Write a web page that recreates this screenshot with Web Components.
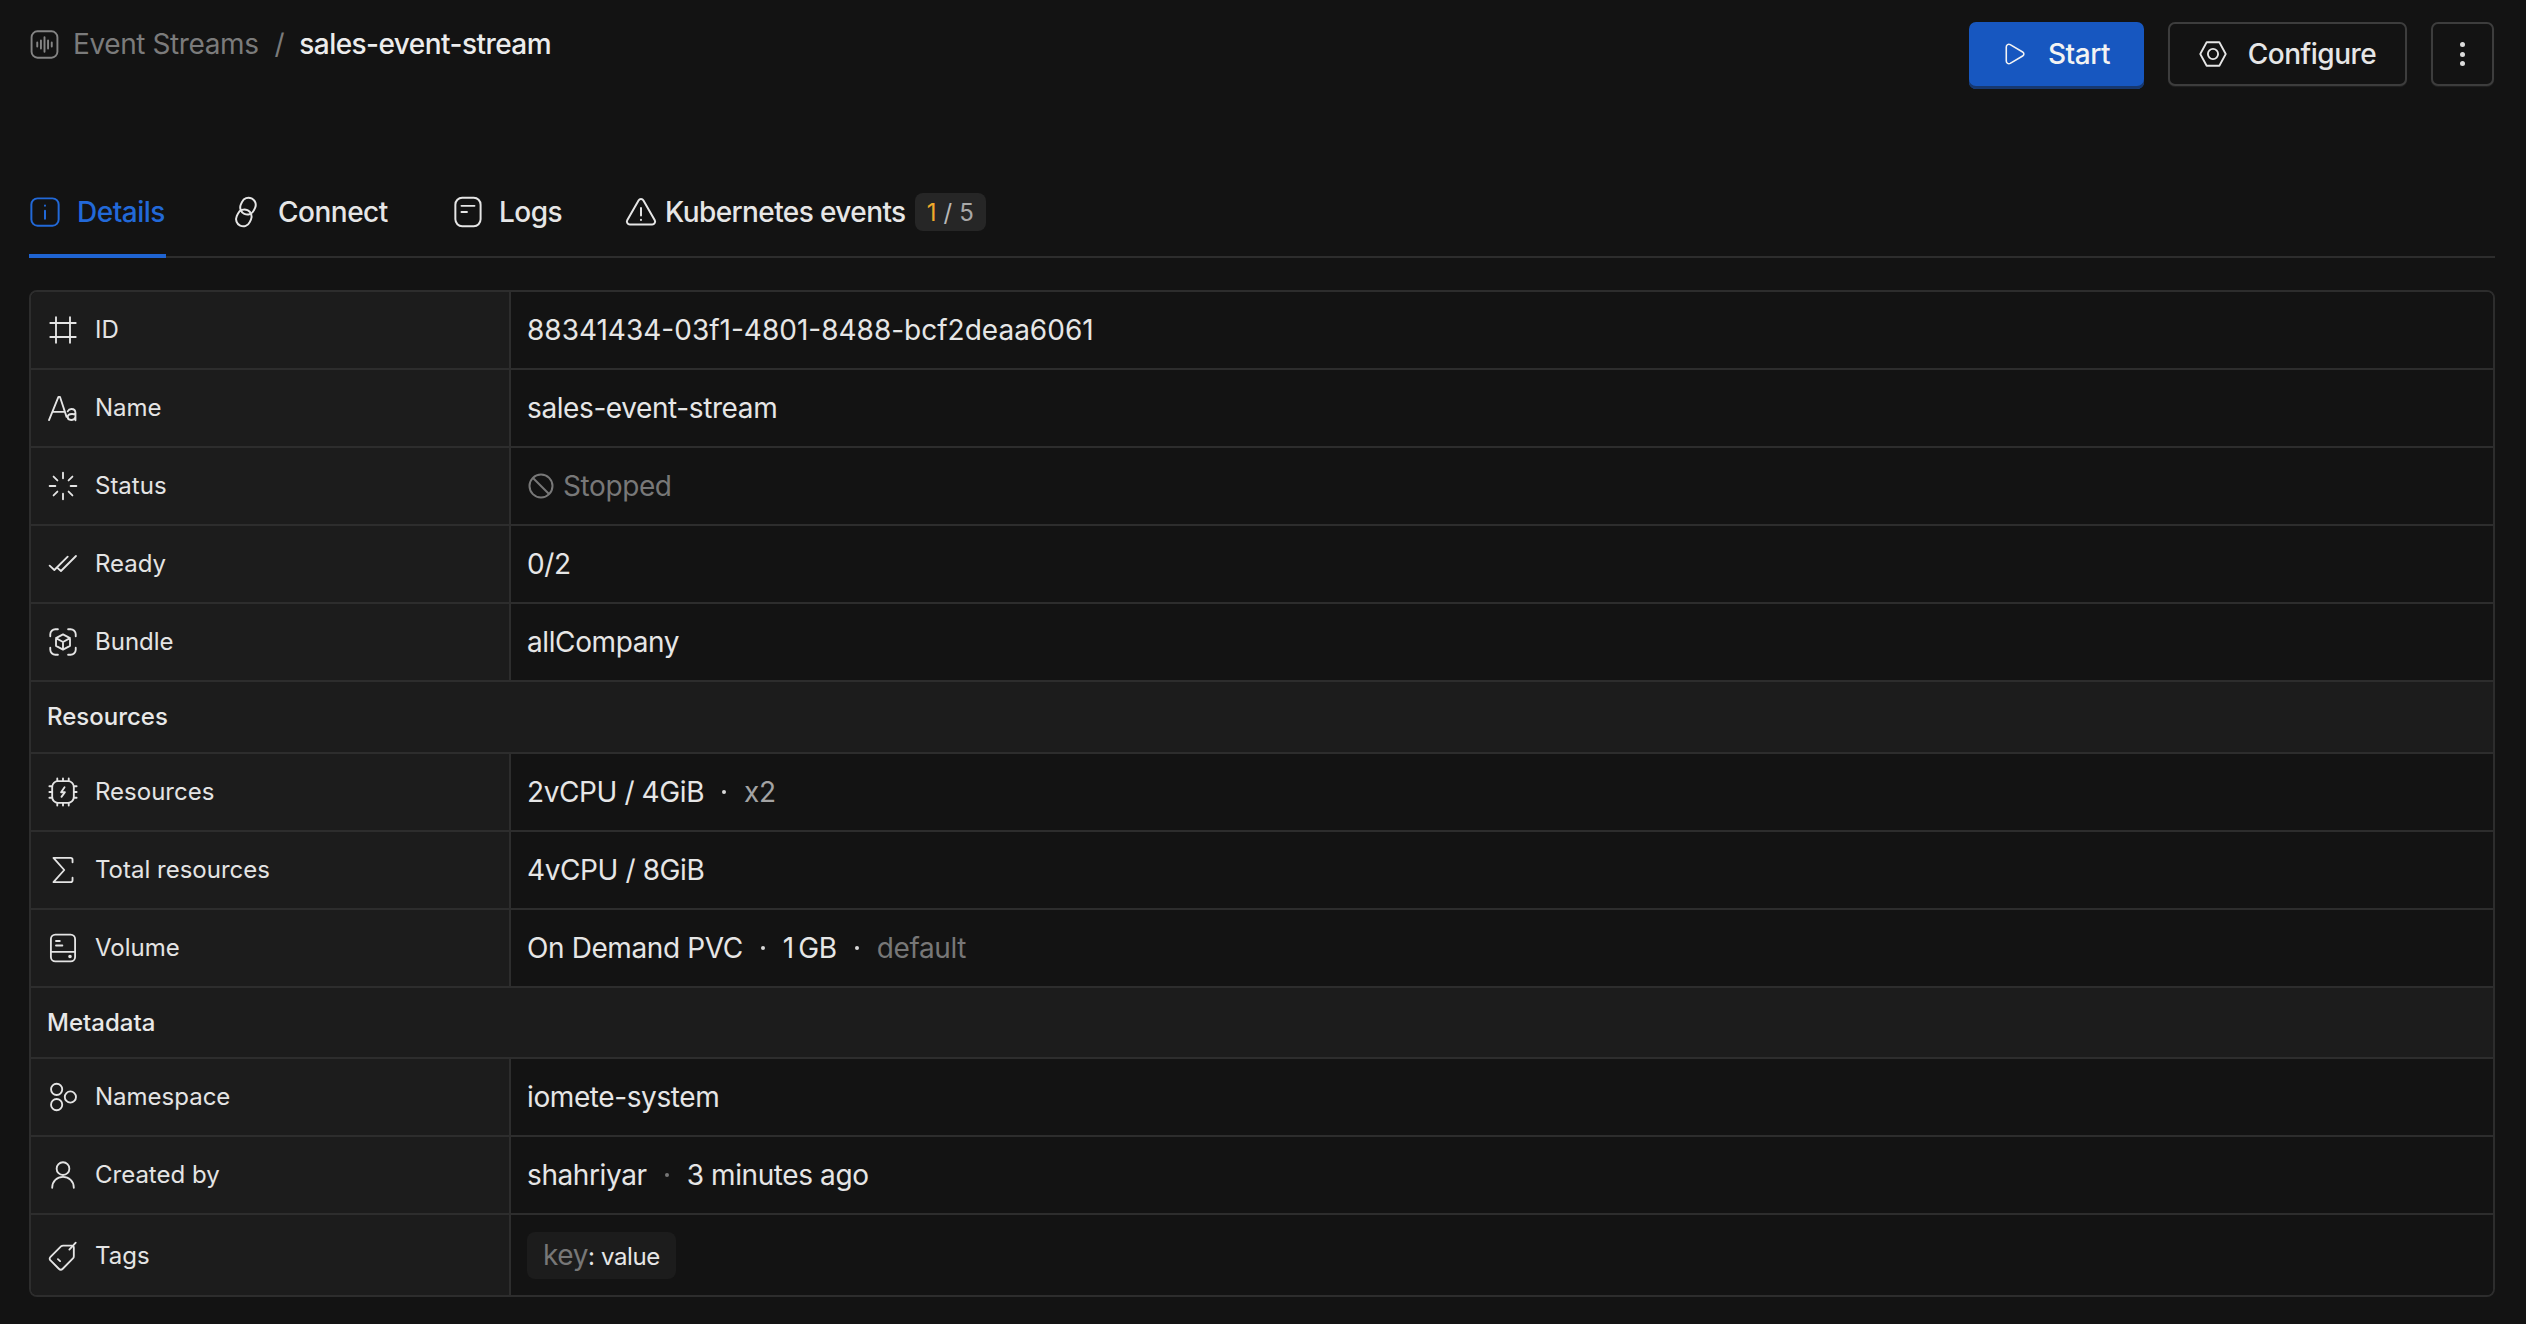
<!doctype html>
<html><head><meta charset="utf-8">
<style>
html,body{margin:0;background:#131313;}
body{font-family:Inter,"Liberation Sans",sans-serif;color:#e6e6e6;}
</style></head>
<body>
<app-page>
  <page-header slot="header" crumb-parent="Event Streams" crumb-current="sales-event-stream"></page-header>
  <tab-bar slot="tabs">
    <tab-item icon="info" active w="137" gap="17">Details</tab-item>
    <tab-item icon="link" w="156" gap="16">Connect</tab-item>
    <tab-item icon="logs" w="107" gap="15">Logs</tab-item>
    <tab-item icon="warn" w="360" gap="9" count="1" total="5">Kubernetes events</tab-item>
  </tab-bar>
  <detail-table slot="table">
    <detail-row icon="hash" label="ID" plain>88341434-03f1-4801-8488-bcf2deaa6061</detail-row>
    <detail-row icon="aa" label="Name">sales-event-stream</detail-row>
    <detail-row icon="status" label="Status"><status-pill>Stopped</status-pill></detail-row>
    <detail-row icon="ready" label="Ready">0/2</detail-row>
    <detail-row icon="bundle" label="Bundle">allCompany</detail-row>
    <section-row>Resources</section-row>
    <detail-row icon="chip" label="Resources"><dot-list><span>2vCPU / 4GiB</span><span class="m">x2</span></dot-list></detail-row>
    <detail-row icon="sigma" label="Total resources">4vCPU / 8GiB</detail-row>
    <detail-row icon="volume" label="Volume"><dot-list><span>On Demand PVC</span><span>1&#8201;GB</span><span class="d">default</span></dot-list></detail-row>
    <section-row h="69">Metadata</section-row>
    <detail-row icon="ns" label="Namespace">iomete-system</detail-row>
    <detail-row icon="user" label="Created by"><dot-list dim><span>shahriyar</span><span>3 minutes ago</span></dot-list></detail-row>
    <detail-row icon="tag" label="Tags" h="80"><tag-chip k="key" v="value"></tag-chip></detail-row>
  </detail-table>
</app-page>
<script>
const ICONS={
 stream:'<rect x="2.2" y="2" width="19.6" height="20" rx="4.5"/><path d="M6.5 10.5v3M9.3 9v6M12 6.5v11M14.7 9v6M17.5 10.5v3"/>',
 info:'<rect x="2" y="2" width="20" height="20" rx="4.5"/><path d="M12 11v6M12 7.2v.3"/>',
 link:'<g transform="translate(-.8 0) rotate(25 12 12)"><rect x="6.3" y="1.2" width="10.5" height="12.5" rx="5.2"/><rect x="7.2" y="10.3" width="10.5" height="12.5" rx="5.2"/></g>',
 logs:'<rect x="2" y="1.6" width="18.5" height="20.8" rx="5"/><path d="M6.5 7.5h9.5M6.5 12h4"/>',
 warn:'<path d="M10.2 3.5 1.9 18a2.2 2.2 0 0 0 1.9 3.2h16.4a2.2 2.2 0 0 0 1.9-3.2L13.8 3.5a2.1 2.1 0 0 0-3.6 0Z"/><path d="M12 9v5.5M12 17.6v.2"/>',
 play:'<path d="M4 5.5c0-2 2-3 3.6-2.1L19 10.2c1.5 .9 1.5 2.7 0 3.6L7.6 20.6C6 21.5 4 20.5 4 18.5Z"/>',
 nut:'<path d="M7 2.8h10l5 9.2-5 9.2H7L2 12Z"/><circle cx="12" cy="12" r="4"/>',
 hash:'<path d="M2 6.5h20M2 17.5h20M6.5 2v20M17.5 2v20"/>',
 aa:'<path d="M1 21.5 8.4 3.2h1.2L14.8 19M3.6 15h9.6"/><path d="M15.7 14.6c.6-1.2 1.6-1.8 2.9-1.8 2 0 3.2 1.2 3.2 3.2v5.6M21.8 17.2c-.6-.3-1.6-.5-2.7-.5-2 0-3.4 1-3.4 2.4s1.100 2.3 2.7 2.3c1.6 0 2.9-.8 3.4-2.2"/>',
 status:'<path d="M12 1.5v4.5M12 18v4.5M1.5 12h4.5M18 12h4.5M4.6 4.6l3 3M16.4 16.4l3 3M4.6 19.4l3-3M16.4 7.6l3-3"/>',
 ready:'<path d="M1.5 13.3l3.7 3.4L15.7 6.2M10.4 17.5 22.2 5.7M7.8 15.2l2.6 2.3"/>',
 bundle:'<path d="M2 7.5V6a4 4 0 0 1 4-4h2M16 2h2a4 4 0 0 1 4 4v1.5M22 16.5V18a4 4 0 0 1-4 4h-2M8 22H6a4 4 0 0 1-4-4v-1.5"/><path d="M12 6l5.5 3v6L12 18l-5.5-3V9ZM6.5 9 12 12l5.5-3M12 12v6"/>',
 chip:'<rect x="3.5" y="3.5" width="17" height="17" rx="4.5"/><path d="M7.5 1.3v2.2M12 1.3v2.2M16.5 1.3v2.2M7.5 20.5v2.2M12 20.5v2.2M16.5 20.5v2.2M1.3 7.5h2.2M1.3 12h2.2M1.3 16.5h2.2M20.5 7.5h2.2M20.5 12h2.2M20.5 16.5h2.2"/><path d="M13.2 8.3 10.5 12.2h3L10.8 15.8"/>',
 sigma:'<path d="M19.5 6V4a1.5 1.5 0 0 0-1.5-1.5H4.5L13 12 4.5 21.5H18a1.5 1.5 0 0 0 1.5-1.5v-2"/>',
 volume:'<rect x="2.5" y="1.5" width="19" height="21" rx="3.5"/><path d="M2.5 15h19M6.5 6.5h3M6.5 10h5"/><circle cx="17.5" cy="18.7" r=".7"/>',
 ns:'<circle cx="7" cy="6" r="4.4"/><circle cx="7" cy="18" r="4.4"/><circle cx="17.8" cy="12" r="4.4"/>',
 user:'<circle cx="12" cy="7" r="5"/><path d="M3.5 22c0-5 3.8-8.5 8.5-8.5s8.5 3.5 8.5 8.5"/>',
 tag:'<path d="M2.2 12.7 10.4 4.5c.5-.5 1.1-.7 1.8-.7h6.6c1 0 1.7.8 1.7 1.7v6.6c0 .7-.2 1.3-.7 1.800l-8 8.100c-.9.9-2.2.9-3.1 0l-6.500-6.500c-.9-.8-.9-1.900 0-2.800Z"/><path d="M8 14.5l1.7 1.500M17 7l5-5.500"/>'
};
function define(name,render){
  customElements.define(name,class extends HTMLElement{
    connectedCallback(){
      if(this.shadowRoot) return;
      this.attachShadow({mode:'open'}).innerHTML=render(this);
    }
  });
}
define('ui-icon',el=>{
  const s=el.getAttribute('size')||28, sw=el.getAttribute('sw')||1.45;
  return `<style>:host{display:inline-flex;flex:none;width:${s}px;height:${s}px}svg{width:100%;height:100%;display:block;fill:none;stroke:currentColor;stroke-width:${sw};stroke-linecap:round;stroke-linejoin:round;overflow:visible}</style><svg viewBox="1 1 22 22">${ICONS[el.getAttribute('name')]||''}</svg>`;
});
define('app-page',()=>`<style>:host{display:block;box-sizing:border-box;width:2526px;height:1324px;padding:22px 31px 0 29px;background:#131313;overflow:hidden}
 .tabs{display:block;margin-top:86px}.table{display:block;margin-top:32px}</style>
 <slot name="header"></slot><div class="tabs"><slot name="tabs"></slot></div><div class="table"><slot name="table"></slot></div>`);
define('page-header',el=>`<style>:host{display:flex;justify-content:space-between;align-items:flex-start;height:67px}
 .crumb{display:flex;align-items:center;font-size:28px;height:44px;padding-left:1px;letter-spacing:-.4px}
 .p{color:#7b7b7b;margin-left:14px}.s{color:#7b7b7b;margin:0 15px 0 16px}.c{color:#ececec;font-weight:500;letter-spacing:-.55px}
 .acts{display:flex;gap:24px;margin-right:1px}
 ui-icon{color:#858585}</style>
 <div class="crumb"><ui-icon name="stream" size="29"></ui-icon><span class="p">${el.getAttribute('crumb-parent')}</span><span class="s">/</span><span class="c">${el.getAttribute('crumb-current')}</span></div>
 <div class="acts"><ui-button primary icon="play" w="175">Start</ui-button><ui-button icon="nut" w="239">Configure</ui-button><ui-button more w="63"></ui-button></div>`);
define('ui-button',el=>{
  const p=el.hasAttribute('primary'),more=el.hasAttribute('more');
  return `<style>:host{display:inline-flex;box-sizing:border-box;width:${el.getAttribute('w')}px;height:${p?67:64}px}
  .b{flex:1;box-sizing:border-box;display:flex;align-items:center;justify-content:center;gap:${p?21:21}px;font-size:28px;font-weight:500;letter-spacing:-.5px;border-radius:7px;
   ${p?'height:67px;background:#1757c0;border:0;color:#f3f3f3;box-shadow:inset 0 -3px 0 #17386f;padding-bottom:3px;':'height:64px;background:#131313;border:2px solid #3d3d3d;color:#e6e6e6;box-shadow:0 1px 1px #222;'}}
  .dots{display:flex;flex-direction:column;gap:4.5px}.dots i{width:5px;height:5px;border-radius:50%;background:#dcdcdc;display:block}</style>
  <div class="b">${more?'<div class="dots"><i></i><i></i><i></i></div>':`<ui-icon name="${el.getAttribute('icon')}" size="${p?24:28}"></ui-icon><span><slot></slot></span>`}</div>`;
});
define('tab-bar',()=>`<style>:host{display:flex;height:83px;box-sizing:border-box;border-bottom:2px solid #2d2d2d;align-items:stretch}
 </style><slot></slot>`);
define('tab-item',el=>{
  const a=el.hasAttribute('active'),c=el.getAttribute('count'),ic=el.getAttribute('icon');
  const isK=!!c;
  return `<style>:host{display:flex;box-sizing:border-box;flex:none;width:${el.getAttribute('w')}px;margin-right:${ic==='logs'?'65px':isK?'0':'66px'};white-space:nowrap;
   align-items:center;height:83px;padding-bottom:9px;font-size:28px;font-weight:500;letter-spacing:${isK?'-.6px':'-.5px'};color:${a?'#2269d8':'#e6e6e6'};${a?'box-shadow:inset 0 -4px 0 #1f64d2;':''}gap:${el.getAttribute('gap')}px;padding-left:${a?'1px':'0'}}
   .bd{display:inline-flex;align-items:center;justify-content:center;height:38px;width:72px;border-radius:8px;background:#262626;font-size:24px;font-weight:400;letter-spacing:0;color:#a8a8a8;gap:7px}
   .y{color:#f0aa2b}.w{color:#b8b8b8}</style>
   <ui-icon name="${ic}" size="30"></ui-icon><span><slot></slot></span>${isK?`<span class="bd"><span class="y">${c}</span><span class="w">/</span><span>${el.getAttribute('total')}</span></span>`:''}`;
});
define('detail-table',()=>`<style>:host{display:block;box-sizing:border-box;border:2px solid #2d2d2d;border-radius:8px;overflow:hidden;height:1007px}</style><slot></slot>`);
define('detail-row',el=>{
  const h=+(el.getAttribute('h')||76);
  return `<style>:host{display:grid;grid-template-columns:480px 1fr;height:${h+2}px;box-sizing:border-box;border-bottom:2px solid #2d2d2d}
  :host(:last-child){border-bottom:0}
  .l{display:flex;align-items:center;gap:18px;background:#1c1c1c;border-right:2px solid #2d2d2d;padding-left:18px;font-size:24px;font-weight:400;color:#e4e4e4}
  .l span{position:relative;top:-1px}
  .v{display:flex;align-items:center;padding-left:16px;font-size:28px;letter-spacing:${el.hasAttribute('plain')?'0':'-.4px'};color:#e6e6e6;background:#131313}</style>
  <div class="l"><ui-icon name="${el.getAttribute('icon')}"></ui-icon><span>${el.getAttribute('label')}</span></div><div class="v"><slot></slot></div>`;
});
define('section-row',el=>`<style>:host{display:flex;align-items:center;height:${+(el.getAttribute('h')||70)+2}px;box-sizing:border-box;border-bottom:2px solid #2d2d2d;background:#1c1c1c;padding:0 0 1px 16px;font-size:24px;font-weight:500;color:#e8e8e8}</style><slot></slot>`);
define('status-pill',()=>`<style>:host{display:inline-flex;align-items:center;gap:9px;color:#787878;margin-left:1px}
 svg{width:26px;height:26px;fill:none;stroke:#787878;stroke-width:2}</style><svg viewBox="0 0 26 26"><circle cx="13" cy="13" r="11.5"/><path d="M5 5l16 16"/></svg><span><slot></slot></span>`);
customElements.define('dot-list',class extends HTMLElement{
  connectedCallback(){
    if(this.shadowRoot) return;
    const dim=this.hasAttribute('dim');
    const root=this.attachShadow({mode:'open'});
    const items=[...this.querySelectorAll('span')];
    root.innerHTML=`<style>:host{display:inline-flex;align-items:center}
      .x{display:inline-block;width:4px;height:4px;border-radius:50%;background:${dim?'#777':'#d8d8d8'};margin:0 18px}
      .t{color:#e6e6e6}.m{color:#a3a3a3}.d{color:#777}</style>`+
      items.map((s,i)=>(i?'<i class="x"></i>':'')+`<span class="t ${s.className}">${s.innerHTML}</span>`).join('');
  }
});
define('tag-chip',el=>`<style>:host{display:inline-flex;align-items:center;height:47px;padding:0 16px;border-radius:8px;background:#1c1c1c;font-size:28px;color:#e6e6e6;margin-top:-2px}
 .k{color:#777}.v{font-size:24px;position:relative;top:1px;white-space:pre}</style><span class="k">${el.getAttribute('k')}</span><span class="v">: ${el.getAttribute('v')}</span>`);
</script>
</body></html>
